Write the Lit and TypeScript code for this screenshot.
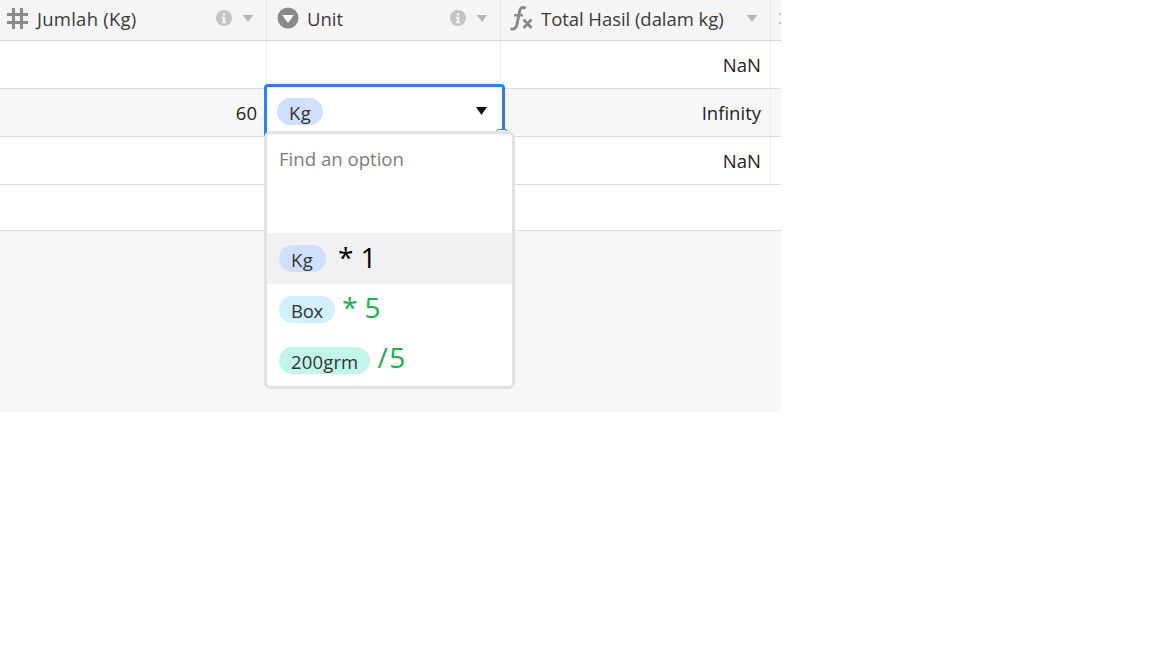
import { LitElement, html, css, svg } from "lit";
import { customElement } from "lit/decorators.js";

const info = svg`<svg class="ic info" width="16" height="16" viewBox="0 0 16 16"><circle cx="8" cy="8" r="8" fill="#c4c4c4"/><rect x="6.7" y="3" width="2.6" height="2.6" rx="1.2" fill="#f5f5f5"/><path d="M5.8 6.8h3.4v5h1v1.4H5.8v-1.4h1V8.2h-1z" fill="#f5f5f5"/></svg>`;
const caret = svg`<svg class="ic caret" width="10" height="7" viewBox="0 0 10 7"><path d="M0 0h10L5 7z" fill="#b5b5b5"/></svg>`;
const hash = svg`<svg class="ic" width="21" height="21" viewBox="0 0 21 21"><path d="M6.500 0v21M14.500 0v21M0 6.500h21M0 14.500h21" stroke="#8a8a8a" stroke-width="3" fill="none"/></svg>`;
const single = svg`<svg class="ic" width="22" height="22" viewBox="0 0 22 22"><circle cx="11" cy="11" r="10.500" fill="#8a8a8a"/><path d="M5.200 8h11.600L11 16z" fill="#f5f5f5"/></svg>`;
const fx = svg`<svg class="ic" width="23" height="25" viewBox="0 0 23 25"><path d="M15.500 2.600C13.500.6 10.600 1.200 9.800 4.500L6.800 19c-.8 3.600-3 4.600-6.300 3.600" stroke="#8a8a8a" stroke-width="3" fill="none"/><path d="M4 9.300h9" stroke="#8a8a8a" stroke-width="2.400"/><path d="M13.500 13.500l8 8.500M21.500 13.500l-8 8.500" stroke="#8a8a8a" stroke-width="2.800"/></svg>`;
const clip = svg`<svg width="2" height="11" viewBox="0 0 2 11"><path d="M0 1h2M0 10h2" stroke="#c8c8c8" stroke-width="2"/></svg>`;

@customElement("app-root")
export class AppRoot extends LitElement {
  static styles = css`
    :host { display: block; width: 1152px; height: 648px; background: #fff; font-family: "Open Sans", "Noto Sans", sans-serif; color: #222; overflow: hidden; }
    .table { position: relative; width: 781px; display: flex; flex-direction: column; }
    .row { display: grid; grid-template-columns: 267px 234px 270px 10px; box-sizing: border-box; border-bottom: 1px solid #dcdcdc; height: 48px; }
    .head { height: 41px; background: #f5f5f5; border-bottom: 1px solid #d4d4d4; }
    .head .cell { border-right: 1px solid #e2e2e2; display: flex; align-items: center; padding-bottom: 4px; font-size: 18.5px; color: #3a3a3a; }
    .head .cell:last-child { border-right: 0; padding-left: 8px; overflow: hidden; }
    .h1 { padding-left: 7px; }
    .h2 { padding-left: 10px; }
    .h3 { padding-left: 9px; }
    .head .name { margin-left: 9px; flex: 1; white-space: nowrap; }
    .h1 .name { letter-spacing: 0.25px; }
    .h2 .name { margin-left: 8px; }
    .h3 .name { margin-left: 8px; letter-spacing: -0.05px; }
    .ic { flex: none; }
    .info + .caret { margin-left: 11px; }
    .h1, .h2, .h3 { padding-right: 13px; }
    .row.alt { background: #f7f7f7; }
    .cell { box-sizing: border-box; border-right: 1px solid #efefef; }
    .cell:last-child { border-right: 0; }
    .num { display: flex; align-items: center; justify-content: flex-end; padding-right: 9px; font-size: 18.5px; color: #222; }
    .sh { height: 46px; }
    .foot { height: 181px; background: #f7f7f7; }
    .editor { position: absolute; left: 264px; top: 84px; width: 241px; height: 54px; box-sizing: border-box; border: 3px solid #2d7ff9; border-radius: 4px; background: #fff; display: flex; align-items: center; padding: 0 15px 0 10px; justify-content: space-between; }
    .handle { position: absolute; left: 496px; top: 129px; width: 12px; height: 8px; box-sizing: border-box; background: #fff; border: 1px solid #2d7ff9; border-radius: 3px; }
    .pill { display: inline-flex; align-items: center; height: 27px; border-radius: 14px; padding: 2px 12px 0; font-size: 18.5px; color: #333; box-sizing: border-box; }
    .blue { background: #cfdfff; letter-spacing: 0.5px; }
    .cyan { background: #d0f0fd; letter-spacing: -0.3px; }
    .teal { background: #c2f5e9; letter-spacing: 0.15px; }
    .pop { position: absolute; left: 264px; top: 131px; width: 251px; height: 258px; box-sizing: border-box; border: 3px solid #e2e2e2; border-radius: 7px 6px 6px 6px; background: #fff; display: flex; flex-direction: column; }
    .search { height: 99px; padding: 12px 12px 0; box-sizing: border-box; font-size: 18.6px; color: #7c7c7c; }
    .opt { height: 51px; display: flex; align-items: center; padding: 0 12px; box-sizing: border-box; gap: 7px; font-size: 28px; color: #12b34a; }
    .opt .pill { color: #333; }
    .opt .t { margin-top: -5px; white-space: pre; }
    .opt.on { background: #f1f1f1; color: #000; gap: 12px; }
    .opt.on .pill { padding-right: 12.5px; }
    .opt.on .t { margin-top: -4px; }
    .opt.slash .t { margin-top: -7px; letter-spacing: 1.5px; }
  `;

  render() {
    return html`<div class="table">
      <div class="row head">
        <div class="cell h1">${hash}<span class="name">Jumlah (Kg)</span>${info}${caret}</div>
        <div class="cell h2">${single}<span class="name">Unit</span>${info}${caret}</div>
        <div class="cell h3">${fx}<span class="name">Total Hasil (dalam kg)</span>${caret}</div>
        <div class="cell">${clip}</div>
      </div>
      <div class="row"><div class="cell"></div><div class="cell"></div><div class="cell num">NaN</div><div class="cell"></div></div>
      <div class="row alt"><div class="cell num">60</div><div class="cell"></div><div class="cell num">Infinity</div><div class="cell"></div></div>
      <div class="row"><div class="cell"></div><div class="cell"></div><div class="cell num">NaN</div><div class="cell"></div></div>
      <div class="row sh"></div>
      <div class="foot"></div>
      <div class="editor"><span class="pill blue">Kg</span><svg width="11" height="8" viewBox="0 0 11 8"><path d="M0 0h11L5.500 8z" fill="#111"/></svg></div>
      <div class="handle"></div>
      <div class="pop">
        <div class="search">Find an option</div>
        <div class="opt on"><span class="pill blue">Kg</span><span class="t">* 1</span></div>
        <div class="opt"><span class="pill cyan">Box</span><span class="t">* 5</span></div>
        <div class="opt slash"><span class="pill teal">200grm</span><span class="t">/5</span></div>
      </div>
    </div>`;
  }
}
